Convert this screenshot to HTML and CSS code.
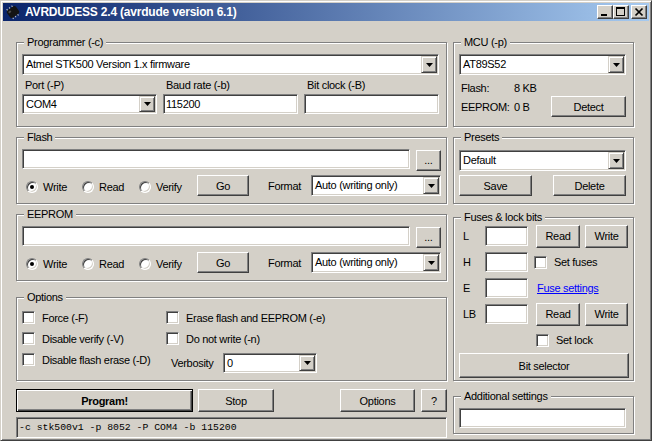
FILE: index.html
```html
<!DOCTYPE html>
<html>
<head>
<meta charset="utf-8">
<title>AVRDUDESS</title>
<link rel="stylesheet" href="styles.css">
</head>
<body>
<div class="window">
  <div class="titlebar">
    <svg class="appicon" width="16" height="16" viewBox="0 0 16 16">
      <g transform="rotate(-35 8 8)">
        <g stroke="#c8c8c8" stroke-width="1">
          <line x1="4.5" y1="2" x2="4.5" y2="4"/>
          <line x1="7.5" y1="2" x2="7.5" y2="4"/>
          <line x1="10.5" y1="2" x2="10.5" y2="4"/>
          <line x1="4.5" y1="12" x2="4.5" y2="14"/>
          <line x1="7.5" y1="12" x2="7.5" y2="14"/>
          <line x1="10.5" y1="12" x2="10.5" y2="14"/>
        </g>
        <rect x="2.5" y="3.5" width="11" height="9" rx="2.5" fill="#141414"/>
        <rect x="4" y="5" width="3" height="2" rx="1" fill="#4a4a4a"/>
      </g>
    </svg>
    <span class="title">AVRDUDESS 2.4 (avrdude version 6.1)</span>
    <div class="caption">
      <span class="cbtn"><svg width="14" height="12" viewBox="0 0 14 12" shape-rendering="crispEdges"><rect x="3" y="8" width="6" height="2" fill="#000"/></svg></span>
      <span class="cbtn"><svg width="14" height="12" viewBox="0 0 14 12" shape-rendering="crispEdges"><path d="M2 1h9v9H2z M3 3v6h7V3z" fill="#000" fill-rule="evenodd"/></svg></span>
      <span class="cbtn cbtn-close"><svg width="14" height="12" viewBox="0 0 14 12"><path d="M3.5 2.5l7 7M10.5 2.5l-7 7" stroke="#000" stroke-width="1.7"/></svg></span>
    </div>
  </div>

  <div class="client">
    <div class="col col-left">
      <div class="group g-prog">
        <span class="legend">Programmer (-c)</span>
        <div class="combo">
          <span class="combo-text">Atmel STK500 Version 1.x firmware</span>
          <span class="arrow"><svg width="7" height="4" viewBox="0 0 7 4"><path d="M0 0h7L3.5 4z" fill="#000"/></svg></span>
        </div>
        <div class="triple">
          <div class="field">
            <span class="flabel">Port (-P)</span>
            <div class="combo combo-sm">
              <span class="combo-text">COM4</span>
              <span class="arrow"><svg width="7" height="4" viewBox="0 0 7 4"><path d="M0 0h7L3.5 4z" fill="#000"/></svg></span>
            </div>
          </div>
          <div class="field">
            <span class="flabel">Baud rate (-b)</span>
            <div class="textbox">115200</div>
          </div>
          <div class="field">
            <span class="flabel">Bit clock (-B)</span>
            <div class="textbox"></div>
          </div>
        </div>
      </div>

      <div class="group g-mem">
        <span class="legend">Flash</span>
        <div class="file-row">
          <div class="textbox file-box"></div>
          <span class="btn btn-browse">...</span>
        </div>
        <div class="mode-row">
          <label class="radio-item"><span class="radio checked"></span><span>Write</span></label>
          <label class="radio-item"><span class="radio"></span><span>Read</span></label>
          <label class="radio-item"><span class="radio"></span><span>Verify</span></label>
          <span class="btn btn-go">Go</span>
          <span class="fmt-label">Format</span>
          <div class="combo">
            <span class="combo-text">Auto (writing only)</span>
            <span class="arrow"><svg width="7" height="4" viewBox="0 0 7 4"><path d="M0 0h7L3.5 4z" fill="#000"/></svg></span>
          </div>
        </div>
      </div>

      <div class="group g-mem">
        <span class="legend">EEPROM</span>
        <div class="file-row">
          <div class="textbox file-box"></div>
          <span class="btn btn-browse">...</span>
        </div>
        <div class="mode-row">
          <label class="radio-item"><span class="radio checked"></span><span>Write</span></label>
          <label class="radio-item"><span class="radio"></span><span>Read</span></label>
          <label class="radio-item"><span class="radio"></span><span>Verify</span></label>
          <span class="btn btn-go">Go</span>
          <span class="fmt-label">Format</span>
          <div class="combo">
            <span class="combo-text">Auto (writing only)</span>
            <span class="arrow"><svg width="7" height="4" viewBox="0 0 7 4"><path d="M0 0h7L3.5 4z" fill="#000"/></svg></span>
          </div>
        </div>
      </div>

      <div class="group g-options">
        <span class="legend">Options</span>
        <div class="opt-grid">
          <label class="chk-item"><span class="chk"></span><span>Force (-F)</span></label>
          <label class="chk-item"><span class="chk"></span><span>Erase flash and EEPROM (-e)</span></label>
          <label class="chk-item"><span class="chk"></span><span>Disable verify (-V)</span></label>
          <label class="chk-item"><span class="chk"></span><span>Do not write (-n)</span></label>
          <label class="chk-item"><span class="chk"></span><span>Disable flash erase (-D)</span></label>
          <div class="verb">
            <span class="verb-label">Verbosity</span>
            <div class="combo combo-sm combo-verb">
              <span class="combo-text">0</span>
              <span class="arrow"><svg width="7" height="4" viewBox="0 0 7 4"><path d="M0 0h7L3.5 4z" fill="#000"/></svg></span>
            </div>
          </div>
        </div>
      </div>

      <div class="actions">
        <span class="btn btn-default btn-program">Program!</span>
        <span class="btn btn-stop">Stop</span>
        <span class="btn btn-options">Options</span>
        <span class="btn btn-help">?</span>
      </div>
      <div class="cmdline">-c stk500v1 -p 8052 -P COM4 -b 115200</div>
    </div>

    <div class="col col-right">
      <div class="group g-mcu">
        <span class="legend">MCU (-p)</span>
        <div class="combo">
          <span class="combo-text">AT89S52</span>
          <span class="arrow"><svg width="7" height="4" viewBox="0 0 7 4"><path d="M0 0h7L3.5 4z" fill="#000"/></svg></span>
        </div>
        <div class="info-row"><span class="info-label">Flash:</span><span>8 KB</span></div>
        <div class="info-row info-row2"><span class="info-label">EEPROM:</span><span>0 B</span><span class="btn btn-detect">Detect</span></div>
      </div>

      <div class="group g-presets">
        <span class="legend">Presets</span>
        <div class="combo">
          <span class="combo-text">Default</span>
          <span class="arrow"><svg width="7" height="4" viewBox="0 0 7 4"><path d="M0 0h7L3.5 4z" fill="#000"/></svg></span>
        </div>
        <div class="preset-btns">
          <span class="btn btn-preset">Save</span>
          <span class="btn btn-preset">Delete</span>
        </div>
      </div>

      <div class="group g-fuses">
        <span class="legend">Fuses &amp; lock bits</span>
        <div class="fuse-row">
          <span class="fuse-label">L</span>
          <div class="textbox fuse-box"></div>
          <span class="btn btn-read">Read</span>
          <span class="btn btn-write">Write</span>
        </div>
        <div class="fuse-row">
          <span class="fuse-label">H</span>
          <div class="textbox fuse-box"></div>
          <label class="chk-item chk-setfuses"><span class="chk"></span><span>Set fuses</span></label>
        </div>
        <div class="fuse-row">
          <span class="fuse-label">E</span>
          <div class="textbox fuse-box"></div>
          <span class="link">Fuse settings</span>
        </div>
        <div class="fuse-row">
          <span class="fuse-label">LB</span>
          <div class="textbox fuse-box"></div>
          <span class="btn btn-read">Read</span>
          <span class="btn btn-write">Write</span>
        </div>
        <div class="fuse-row">
          <label class="chk-item chk-setlock"><span class="chk"></span><span>Set lock</span></label>
        </div>
        <span class="btn btn-bits">Bit selector</span>
      </div>

      <div class="group g-additional">
        <span class="legend">Additional settings</span>
        <div class="textbox"></div>
      </div>
    </div>
  </div>
</div>
</body>
</html>
```

FILE: styles.css
```css
* { box-sizing: border-box; }

html, body {
  margin: 0;
  padding: 0;
}

body {
  background: #D4D0C8;
  font-family: "Liberation Sans", Arial, sans-serif;
  font-size: 11px;
  letter-spacing: -0.3px;
  color: #000;
}

.window {
  width: 652px;
  height: 441px;
  border: 1px solid;
  border-color: #D4D0C8 #404040 #404040 #D4D0C8;
  box-shadow: inset 1px 1px 0 #fff, inset -1px -1px 0 #808080;
  padding: 2px;
  display: flex;
  flex-direction: column;
}

/* ---------- title bar ---------- */
.titlebar {
  height: 18px;
  flex: none;
  display: flex;
  align-items: center;
  padding-left: 2px;
  background: linear-gradient(to right, #0A246A, #A6CAF0);
}

.appicon { flex: none; margin-right: 4px; }

.title {
  color: #fff;
  font-weight: bold;
  font-size: 12px;
  letter-spacing: -0.2px;
  white-space: nowrap;
}

.caption {
  margin-left: auto;
  margin-right: 2px;
  display: flex;
}

.cbtn {
  width: 16px;
  height: 14px;
  background: #D4D0C8;
  border: 1px solid;
  border-color: #fff #404040 #404040 #fff;
  box-shadow: inset -1px -1px 0 #808080;
  display: flex;
}

.cbtn-close { margin-left: 2px; }

/* ---------- client ---------- */
.client {
  flex: 1;
  display: flex;
  gap: 6px;
  padding-left: 13px;
}

.col {
  display: flex;
  flex-direction: column;
}

.col-left { width: 431px; }
.col-right { width: 181px; }

/* ---------- group box ---------- */
.group {
  position: relative;
  flex: none;
  border: 1px solid #808080;
  box-shadow: 1px 1px 0 #fff, inset 1px 1px 0 #fff;
}

.legend {
  position: absolute;
  top: -7px;
  left: 7px;
  padding: 0 3px 0 3px;
  background: #D4D0C8;
  line-height: 13px;
  white-space: nowrap;
}

/* ---------- common controls ---------- */
.textbox {
  height: 20px;
  background: #fff;
  border: 1px solid;
  border-color: #808080 #fff #fff #808080;
  box-shadow: inset 1px 1px 0 #404040, inset -1px -1px 0 #D4D0C8;
  padding: 0 2px;
  line-height: 18px;
  white-space: nowrap;
}

.btn {
  display: flex;
  align-items: center;
  justify-content: center;
  flex: none;
  background: #D4D0C8;
  border: 1px solid;
  border-color: #fff #404040 #404040 #fff;
  box-shadow: inset -1px -1px 0 #808080;
  white-space: nowrap;
}

.btn-default {
  border-color: #000;
  box-shadow: inset 1px 1px 0 #fff, inset -1px -1px 0 #404040, inset -2px -2px 0 #808080;
  font-weight: bold;
}

.combo {
  display: flex;
  height: 21px;
  background: #fff;
  border: 1px solid;
  border-color: #808080 #fff #fff #808080;
  box-shadow: inset 1px 1px 0 #404040, inset -1px -1px 0 #D4D0C8;
  padding: 1px;
}

.combo-sm { height: 20px; }

.combo-text {
  flex: 1;
  padding-left: 2px;
  line-height: 17px;
  white-space: nowrap;
  overflow: hidden;
}

.combo-sm .combo-text { line-height: 16px; }

.arrow {
  width: 16px;
  flex: none;
  background: #D4D0C8;
  border: 1px solid;
  border-color: #D4D0C8 #404040 #404040 #D4D0C8;
  box-shadow: inset 1px 1px 0 #fff, inset -1px -1px 0 #808080;
  display: flex;
  align-items: center;
  justify-content: center;
}

.arrow svg { display: block; }

.radio {
  position: relative;
  width: 12px;
  height: 12px;
  flex: none;
  border-radius: 50%;
  background: #fff;
  border: 1px solid;
  border-color: #808080 #fff #fff #808080;
  box-shadow: inset 1px 1px 0 #404040, inset -1px -1px 0 #D4D0C8;
}

.radio.checked::after {
  content: "";
  position: absolute;
  left: 3px;
  top: 3px;
  width: 4px;
  height: 4px;
  border-radius: 50%;
  background: #000;
}

.chk {
  width: 13px;
  height: 13px;
  flex: none;
  background: #fff;
  border: 1px solid;
  border-color: #808080 #fff #fff #808080;
  box-shadow: inset 1px 1px 0 #404040, inset -1px -1px 0 #D4D0C8;
}

.chk-item {
  display: flex;
  align-items: center;
  gap: 7px;
  height: 15px;
  white-space: nowrap;
}

.radio-item {
  display: flex;
  align-items: center;
  gap: 5px;
  white-space: nowrap;
  padding-top: 2px;
}

/* ---------- programmer ---------- */
.g-prog {
  margin-top: 21px;
  height: 85px;
  padding: 11px 7px 0 5px;
}

.triple {
  display: grid;
  grid-template-columns: repeat(3, 1fr);
  gap: 6px;
}

.field { display: flex; flex-direction: column; }

.flabel {
  height: 19px;
  padding: 4px 0 0 3px;
  line-height: 13px;
}

/* ---------- flash / eeprom ---------- */
.g-mem {
  margin-top: 10px;
  height: 67px;
  padding: 11px 5px 0 5px;
}

.file-row {
  display: flex;
  height: 22px;
}

.file-box { flex: 1; }

.btn-browse {
  width: 25px;
  height: 21px;
  margin: 1px 0 0 6px;
  align-items: flex-end;
  padding-bottom: 5px;
  line-height: 10px;
}

.mode-row {
  margin-top: 4px;
  height: 21px;
  display: grid;
  grid-template-columns: 56px 57px 58px 52px 62px 1fr;
  padding-left: 4px;
  align-items: center;
}

.btn-go { height: 21px; }

.fmt-label { padding-left: 19px; }

/* ---------- options ---------- */
.g-options {
  margin-top: 16px;
  height: 84px;
  padding: 12px 5px 0 5px;
}

.opt-grid {
  display: grid;
  grid-template-columns: 144px 1fr;
  grid-auto-rows: 21px;
  align-items: start;
}

.verb {
  display: flex;
  align-items: center;
  height: 21px;
}

.verb-label {
  width: 57px;
  padding-left: 5px;
}

.combo-verb { width: 94px; }

/* ---------- bottom actions ---------- */
.actions {
  margin-top: 8px;
  height: 23px;
  display: flex;
}

.btn-program { width: 177px; }
.btn-stop { width: 76px; margin-left: 5px; }
.btn-options { width: 75px; margin-left: auto; }
.btn-help { width: 26px; margin-left: 6px; }

.cmdline {
  margin-top: 5px;
  height: 21px;
  border: 1px solid;
  border-color: #808080 #fff #fff #808080;
  box-shadow: inset 1px 1px 0 #404040, inset -1px -1px 0 #D4D0C8;
  padding-left: 2px;
  font-family: "Liberation Mono", "Courier New", monospace;
  font-size: 9.8px;
  letter-spacing: 0;
  line-height: 19px;
  white-space: nowrap;
}

/* ---------- MCU ---------- */
.g-mcu {
  margin-top: 21px;
  height: 85px;
  padding: 11px 7px 0 5px;
}

.info-row {
  display: flex;
  align-items: center;
  margin-top: 6px;
  height: 13px;
  padding-left: 2px;
}

.info-label { width: 53px; }

.info-row2 {
  margin-top: 2px;
  height: 21px;
}

.btn-detect {
  margin-left: auto;
  width: 75px;
  height: 21px;
}

/* ---------- presets ---------- */
.g-presets {
  margin-top: 10px;
  height: 67px;
  padding: 12px 7px 0 5px;
}

.preset-btns {
  margin-top: 4px;
  display: flex;
  justify-content: space-between;
}

.btn-preset { width: 73px; height: 21px; }

/* ---------- fuses ---------- */
.g-fuses {
  margin-top: 13px;
  height: 164px;
  padding: 5px 4px 0 5px;
}

.fuse-row {
  display: flex;
  align-items: center;
  height: 26px;
}

.fuse-label {
  width: 26px;
  padding-left: 4px;
}

.fuse-box { width: 43px; flex: none; }

.btn-read { width: 44px; height: 23px; margin-left: 8px; }
.btn-write { width: 43px; height: 23px; margin-left: 5px; }

.chk-setfuses { margin-left: 6px; }
.chk-setlock { margin-left: 77px; }

.link {
  margin-left: 9px;
  color: #0000FF;
  text-decoration: underline;
  white-space: nowrap;
}

.btn-bits {
  width: 170px;
  height: 25px;
}

/* ---------- additional ---------- */
.g-additional {
  margin-top: 15px;
  height: 38px;
  padding: 11px 7px 0 5px;
}
```
